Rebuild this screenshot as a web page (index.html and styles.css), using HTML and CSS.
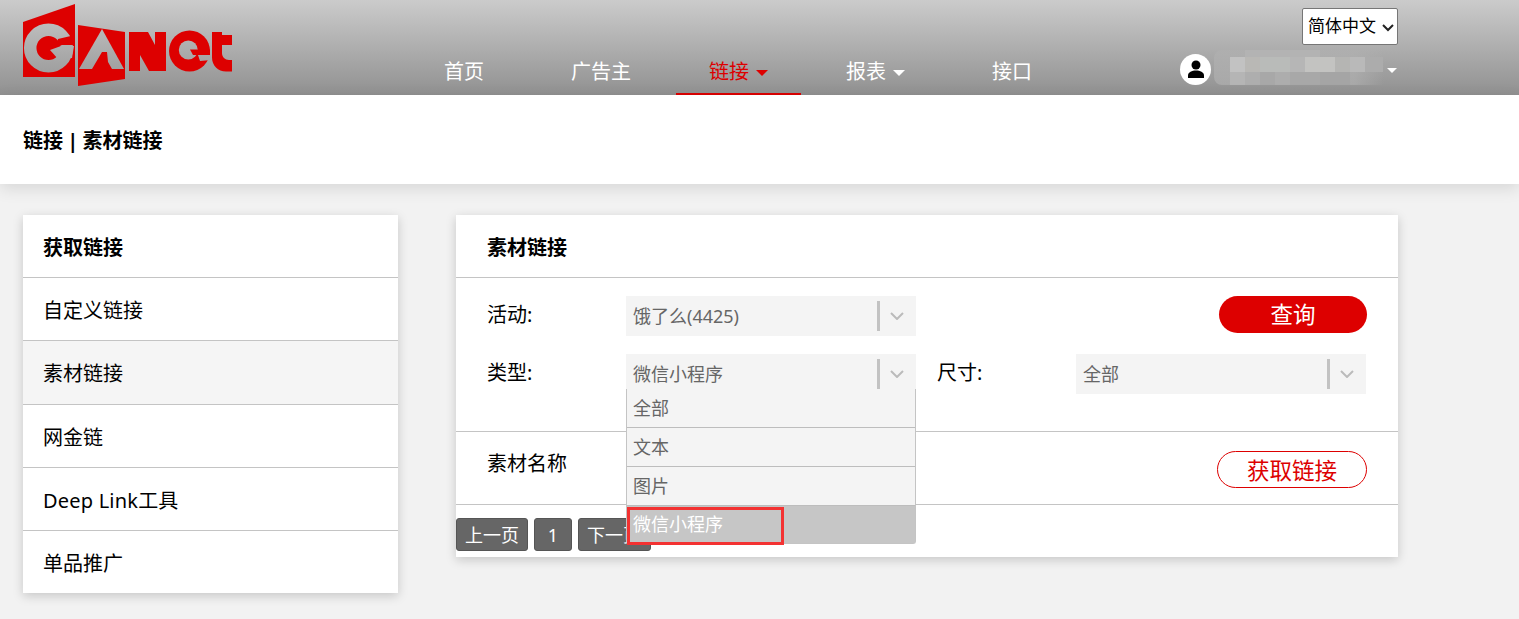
FILE: index.html
```html
<!DOCTYPE html>
<html lang="zh-CN">
<head>
  <meta charset="UTF-8">
  <meta name="viewport" content="width=device-width, initial-scale=1.0">
  <title>链接 | 素材链接</title>
  <link rel="stylesheet" href="styles.css">
</head>

<body>
  <header class="topbar">
    <a href="#" class="logo" aria-label="GANet">
      <svg width="212" height="90" viewBox="0 0 212 90">
        <defs>
          <linearGradient id="barGray" gradientUnits="userSpaceOnUse" x1="0" y1="0" x2="0" y2="95">
            <stop offset="0" stop-color="#cbcbcb"/>
            <stop offset="1" stop-color="#919191"/>
          </linearGradient>
        </defs>
        <g transform="translate(-23 -2)">
          <!-- G panel -->
          <polygon points="23,22 75,4 75,77 23,77" fill="#dd0000"/>
          <circle cx="48.500" cy="48" r="18.300" fill="none" stroke="url(#barGray)" stroke-width="12.500"/>
          <polygon points="58,39 75,35 75,45 62,45 57,47" fill="#dd0000"/>
          <polygon points="50,50 61,46 74,46 72,58 58,59" fill="url(#barGray)"/>
          <!-- A panel -->
          <polygon points="78,25 125,32 125,79 78,86" fill="#dd0000"/>
          <polygon points="102,29 124,69 79,69" fill="url(#barGray)"/>
          <polygon points="102,52 107,52 108,62 112,69 92,69" fill="#dd0000"/>
          <!-- N -->
          <polygon points="129,32 148,32 155,45 155,32 166,32 166,71 149,71 140,55 140,71 129,71" fill="#dd0000"/>
          <!-- e -->
          <circle cx="189.500" cy="51" r="20.500" fill="#dd0000"/>
          <circle cx="188.300" cy="50" r="9.500" fill="url(#barGray)"/>
          <polygon points="190,49.500 210,49.500 210,55 193,55" fill="#dd0000"/>
          <polygon points="198,55 211,55 211,60 200,61" fill="url(#barGray)"/>
          <!-- t -->
          <path d="M212 32h10v3h10v10h-10v8c0 4 3 7 7 7h3v11.500h-6c-8 0-14-6-14-14z" fill="#dd0000"/>
        </g>
      </svg>
    </a>

    <nav class="nav">
      <a href="#" class="nav-item plain">首页</a>
      <a href="#" class="nav-item plain">广告主</a>
      <a href="#" class="nav-item active">链接<span class="caret"></span></a>
      <a href="#" class="nav-item">报表<span class="caret"></span></a>
      <a href="#" class="nav-item plain">接口</a>
    </nav>

    <div class="account">
      <select class="lang">
        <option>简体中文</option>
        <option>English</option>
      </select>
      <div class="user">
        <span class="avatar">
          <svg width="18" height="18" viewBox="0 0 18 18">
            <circle cx="9" cy="5" r="4.500" fill="#000"/>
            <path d="M1 18v-2.500C1 12 5 10.500 9 10.500s8 1.500 8 5V18z" fill="#000"/>
          </svg>
        </span>
        <span class="user-name"><i class="mosaic faint"></i><i class="mosaic top"></i><i class="mosaic bottom"></i></span>
        <span class="caret"></span>
      </div>
    </div>
  </header>

  <div class="crumb">链接 | 素材链接</div>

  <main class="content">
    <aside class="panel side">
      <div class="panel-title">获取链接</div>
      <a href="#" class="side-item">自定义链接</a>
      <a href="#" class="side-item active">素材链接</a>
      <a href="#" class="side-item">网金链</a>
      <a href="#" class="side-item wide">Deep Link工具</a>
      <a href="#" class="side-item">单品推广</a>
    </aside>

    <section class="panel main">
      <div class="panel-title">素材链接</div>

      <div class="filters">
        <div class="filter-row">
          <label class="filter-label">活动:</label>
          <div class="select">
            <span class="select-value">饿了么(4425)</span>
            <span class="select-arrow"><svg width="14" height="8" viewBox="0 0 14 8"><path d="M1 1l6 6 6-6" fill="none" stroke="#bbb" stroke-width="2"/></svg></span>
          </div>
          <button class="btn-query">查询</button>
        </div>

        <div class="filter-row">
          <label class="filter-label">类型:</label>
          <div class="select">
            <span class="select-value">微信小程序</span>
            <span class="select-arrow"><svg width="14" height="8" viewBox="0 0 14 8"><path d="M1 1l6 6 6-6" fill="none" stroke="#bbb" stroke-width="2"/></svg></span>
            <ul class="dropdown">
              <li>全部</li>
              <li>文本</li>
              <li>图片</li>
              <li class="selected">微信小程序<span class="mark"></span></li>
            </ul>
          </div>
          <label class="filter-label size-label">尺寸:</label>
          <div class="select">
            <span class="select-value">全部</span>
            <span class="select-arrow"><svg width="14" height="8" viewBox="0 0 14 8"><path d="M1 1l6 6 6-6" fill="none" stroke="#bbb" stroke-width="2"/></svg></span>
          </div>
        </div>
      </div>

      <div class="result-row">
        <span class="result-name">素材名称</span>
        <button class="btn-link">获取链接</button>
      </div>

      <div class="pager">
        <button class="page-btn">上一页</button>
        <button class="page-btn">1</button>
        <button class="page-btn">下一页</button>
      </div>
    </section>
  </main>
</body>
</html>
```

FILE: styles.css
```css
* {
  box-sizing: border-box;
}

body {
  margin: 0;
  background-color: #f2f2f2;
  color: #000;
  font-family: "Noto Sans", "Noto Sans CJK SC", sans-serif;
  font-size: 20px;
  height: 619px;
  overflow: hidden;
}

a {
  color: inherit;
  text-decoration: none;
}

.topbar {
  display: flex;
  align-items: flex-end;
  height: 95px;
  padding: 0 121px 0 23px;
  background: linear-gradient(#cbcbcb, #919191);
}

.logo {
  display: block;
  width: 212px;
  height: 90px;
  align-self: flex-start;
  margin-top: 2px;
}

.nav {
  display: flex;
  gap: 12px;
  margin-left: 167px;
}

.nav-item {
  width: 125px;
  height: 48px;
  line-height: 50px;
  text-align: center;
  color: #fff;
  border-bottom: 2px solid transparent;
}

.nav-item.plain {
  padding-right: 1px;
}

.nav-item.active {
  color: #dd0000;
  border-bottom-color: #dd0000;
}

.caret {
  display: inline-block;
  margin-left: 7px;
  vertical-align: 3px;
  border-left: 6px solid transparent;
  border-right: 6px solid transparent;
  border-top: 6px solid currentColor;
}

.account {
  display: flex;
  flex-direction: column;
  align-items: flex-end;
  width: 218px;
  height: 95px;
  margin-left: auto;
  padding-top: 8px;
}

.lang {
  width: 96px;
  height: 37px;
  padding: 0 0 4px 5px;
  appearance: none;
  background: #fff url("data:image/svg+xml,%3Csvg xmlns='http://www.w3.org/2000/svg' width='12' height='8'%3E%3Cpath d='M1 1l5 5 5-5' fill='none' stroke='%23222' stroke-width='2'/%3E%3C/svg%3E") no-repeat 79px 15px;
  color: #000;
  border: 1px solid #767676;
  border-radius: 2px;
  font-family: "Noto Sans CJK SC", sans-serif;
  font-size: 17px;
}

.user {
  display: flex;
  align-items: center;
  width: 100%;
  margin-top: 8px;
  color: #fff;
}

.avatar {
  display: flex;
  align-items: center;
  justify-content: center;
  flex: none;
  width: 31px;
  height: 31px;
  border-radius: 50%;
  background-color: #fff;
}

.user-name {
  display: block;
  width: 176px;
  margin: -3px 0 0 3px;
  border-radius: 8px;
  background: linear-gradient(90deg, rgba(176, 176, 176, 0.7) 0 140px, transparent 170px);
}

.mosaic {
  display: block;
  margin-left: 16px;
}

.mosaic.faint {
  height: 7px;
  background: linear-gradient(90deg, transparent 0 15px, #b3b3b3 15px 90px, transparent 90px);
}

.mosaic.top {
  height: 15px;
  background: linear-gradient(90deg, #c2c2c2 0 15px, #b9b8b5 15px 30px, #b9bbb9 30px 60px, #b6b6b6 60px 75px, #c3c3c1 75px 105px, #b5b5b3 105px 120px, #b9b9b9 120px 135px, #acacac 135px 153px, transparent 153px);
}

.mosaic.bottom {
  height: 13px;
  background: linear-gradient(90deg, #b5b5b5 0 15px, #aeaeae 15px 30px, #a8a8a8 30px 45px, #adadad 45px 60px, #a8a8a8 60px 90px, #a5a5a5 90px 120px, transparent 120px);
}

.user .caret {
  flex: none;
  margin-left: -3px;
  margin-top: 3px;
  border-left-width: 5.500px;
  border-right-width: 5.500px;
  border-top-width: 5px;
}

.crumb {
  position: relative;
  height: 89px;
  padding: 0 23px;
  line-height: 91px;
  font-weight: 700;
  word-spacing: -1px;
  background-color: #fff;
  box-shadow: 0 4px 16px rgba(0, 0, 0, 0.12);
}

.content {
  display: grid;
  grid-template-columns: 375px 942px;
  gap: 58px;
  align-items: start;
  padding: 31px 23px 0;
}

.panel {
  background-color: #fff;
  box-shadow: 0 3px 10px rgba(0, 0, 0, 0.18);
}

.panel-title {
  height: 63px;
  line-height: 66px;
  font-weight: 700;
  border-bottom: 1px solid #c4c4c4;
}

.side .panel-title {
  padding-left: 20px;
}

.main .panel-title {
  padding-left: 31px;
}

.side-item {
  display: block;
  height: 63px;
  padding-left: 20px;
  line-height: 66px;
  border-bottom: 1px solid #c4c4c4;
}

.side-item.wide {
  letter-spacing: 0.200px;
}

.side-item.active {
  height: 64px;
  background-color: #f5f5f5;
}

.side-item:last-child {
  height: 62px;
  border-bottom: none;
}

.filters {
  height: 154px;
  padding-top: 18px;
  border-bottom: 1px solid #c4c4c4;
}

.filter-row {
  display: flex;
  align-items: flex-start;
  height: 40px;
  margin-bottom: 18px;
  padding-left: 31px;
}

.filter-label {
  flex: none;
  width: 139px;
  line-height: 38px;
}

.size-label {
  margin-left: 21px;
}

.select {
  position: relative;
  display: flex;
  align-items: center;
  justify-content: space-between;
  width: 290px;
  height: 40px;
  padding-left: 7px;
  background-color: #f4f4f4;
  color: #666;
  font-size: 18px;
}

.select-value {
  margin-bottom: 2px;
}

.select-arrow {
  display: flex;
  align-items: center;
  justify-content: center;
  width: 39px;
  height: 30px;
  border-left: 3px solid #c2c2c2;
  padding-right: 2px;
}

.dropdown {
  position: absolute;
  top: 35px;
  left: 0;
  z-index: 5;
  width: 100%;
  margin: 0;
  padding: 0;
  list-style: none;
  background-color: #f4f4f4;
  border: 1px solid #c4c4c4;
  border-top: none;
  border-radius: 0 0 3px 3px;
}

.dropdown li {
  position: relative;
  height: 39px;
  padding-left: 6px;
  line-height: 39px;
  border-bottom: 1px solid #bdbdbd;
}

.dropdown li.selected {
  height: 37px;
  line-height: 37px;
  background-color: #c6c6c6;
  color: #fff;
  border-bottom: none;
}

.mark {
  position: absolute;
  top: 1px;
  left: 0;
  width: 157px;
  height: 38px;
  border: 3px solid #f33232;
}

.btn-query {
  width: 148px;
  height: 37px;
  margin-left: auto;
  margin-right: 31px;
  padding: 0 0 2px;
  background-color: #dd0000;
  color: #fff;
  border: none;
  border-radius: 19px;
  font-family: inherit;
  font-size: 22.500px;
}

.result-row {
  display: flex;
  align-items: flex-start;
  justify-content: space-between;
  height: 73px;
  padding: 19px 31px 0;
  border-bottom: 1px solid #c4c4c4;
}

.result-name {
  line-height: 26px;
}

.btn-link {
  width: 150px;
  height: 37px;
  padding: 0;
  background-color: #fff;
  color: #dd0000;
  border: 1px solid #dd0000;
  border-radius: 19px;
  font-family: inherit;
  font-size: 22.500px;
}

.pager {
  display: flex;
  gap: 6px;
  height: 52px;
  padding-top: 13px;
}

.page-btn {
  height: 33px;
  padding: 0 8px;
  background-color: #666;
  color: #fff;
  border: 1px solid #555;
  border-radius: 3px;
  font-family: inherit;
  font-size: 18px;
  line-height: 1;
}

.page-btn:nth-child(2) {
  width: 38px;
}

.page-btn:last-child {
  padding-right: 9px;
}
```
